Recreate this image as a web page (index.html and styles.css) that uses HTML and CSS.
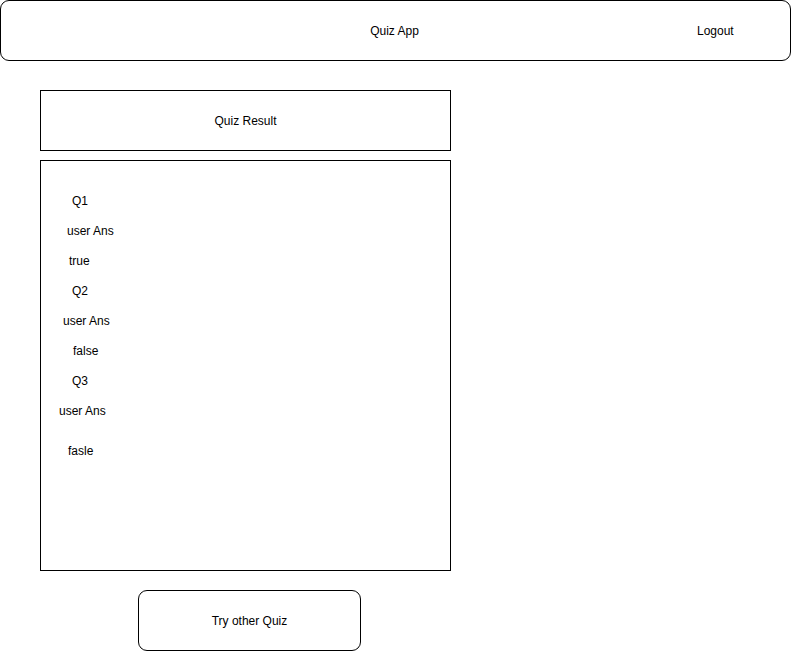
FILE: index.html
```html
<!DOCTYPE html>
<html lang="en">
<head>
<meta charset="utf-8">
<title>Quiz App</title>
<link rel="stylesheet" href="styles.css">
</head>
<body>
<header class="app-header">
  <div class="brand">Quiz App</div>
  <div class="logout">Logout</div>
</header>
<main class="main">
  <div class="result-title">Quiz Result</div>
  <div class="result-list">
    <div class="row i31">Q1</div>
    <div class="row i26">user Ans</div>
    <div class="row i28">true</div>
    <div class="row i31">Q2</div>
    <div class="row i22">user Ans</div>
    <div class="row i32">false</div>
    <div class="row i31">Q3</div>
    <div class="row i18">user Ans</div>
    <div class="row i27 spaced">fasle</div>
  </div>
  <button class="try-btn" type="button">Try other Quiz</button>
</main>
</body>
</html>
```
FILE: styles.css
```css
* { box-sizing: border-box; }
html, body { margin: 0; padding: 0; background: #fff; }
body {
  font-family: "Liberation Sans", Arial, Helvetica, sans-serif;
  font-size: 12px;
  color: #000;
  width: 791px;
  height: 651px;
  overflow: hidden;
}
.app-header {
  width: 791px;
  height: 61px;
  border: 1px solid #000;
  border-radius: 9px;
  display: grid;
  grid-template-columns: 1fr;
  position: relative;
}
.brand {
  align-self: center;
  justify-self: center;
  padding-right: 2px;
}
.logout {
  position: absolute;
  left: 696px;
  top: 23px;
}
.main {
  padding-left: 40px;
  padding-top: 29px;
  display: flex;
  flex-direction: column;
  align-items: flex-start;
}
.result-title {
  width: 411px;
  height: 61px;
  border: 1px solid #000;
  display: flex;
  align-items: center;
  justify-content: center;
}
.result-list {
  margin-top: 9px;
  width: 411px;
  height: 411px;
  border: 1px solid #000;
  padding-top: 25px;
  display: flex;
  flex-direction: column;
}
.row {
  height: 30px;
  line-height: 30px;
}
.row.spaced { margin-top: 10px; }
.i18 { padding-left: 18px; }
.i22 { padding-left: 22px; }
.i26 { padding-left: 26px; }
.i27 { padding-left: 27px; }
.i28 { padding-left: 28px; }
.i31 { padding-left: 31px; }
.i32 { padding-left: 32px; }
.try-btn {
  margin-top: 19px;
  margin-left: 98px;
  width: 223px;
  height: 61px;
  border: 1px solid #000;
  border-radius: 9px;
  background: #fff;
  font-family: inherit;
  font-size: 12px;
  color: #000;
  padding: 0;
}
```
